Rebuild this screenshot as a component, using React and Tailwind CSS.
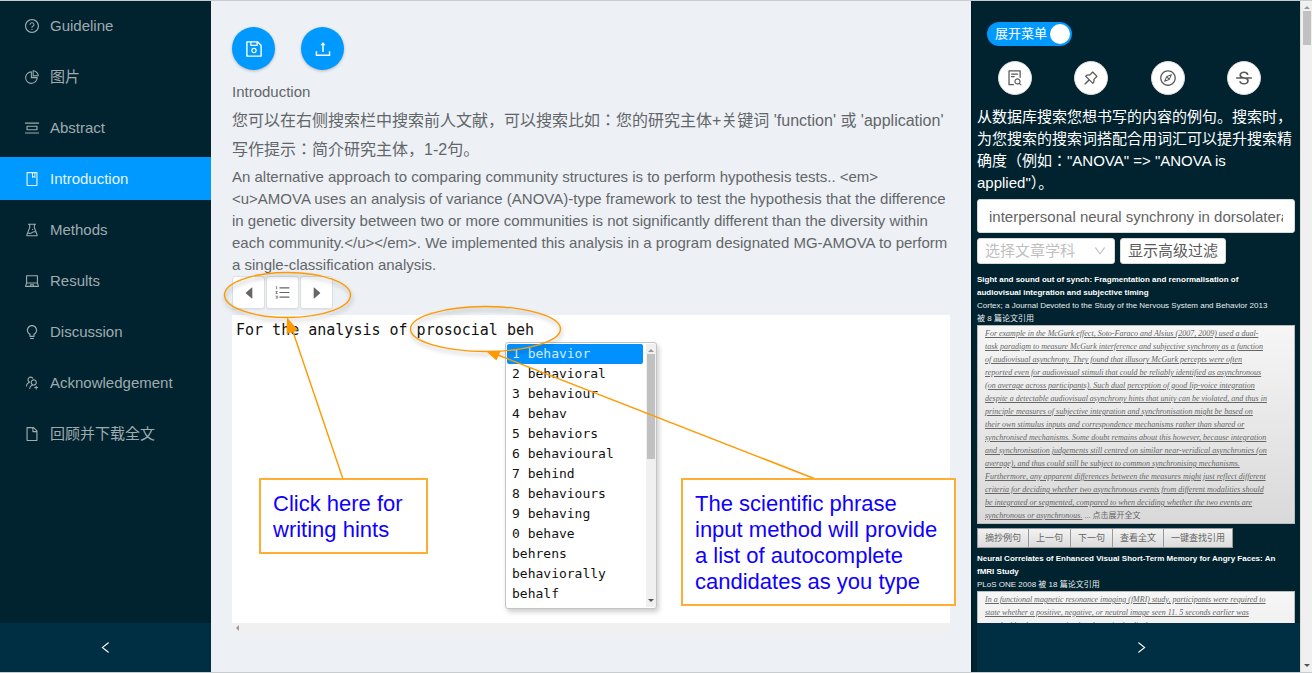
import React from "react";
import {
  AiOutlineQuestionCircle, AiOutlinePieChart, AiOutlinePicCenter, AiOutlineBook, AiOutlineExperiment,
  AiOutlineLaptop, AiOutlineBulb, AiOutlineUsergroupAdd, AiOutlineFile, AiOutlineSave, AiOutlineUpload,
  AiOutlineOrderedList, AiOutlineFileSearch, AiOutlinePushpin, AiOutlineCompass, AiOutlineStrikethrough,
  AiOutlineLeft, AiOutlineRight, AiOutlineDown, AiFillCaretLeft, AiFillCaretRight,
} from "react-icons/ai";

const MENU = [
  [AiOutlineQuestionCircle, "Guideline"],
  [AiOutlinePieChart, "图片"],
  [AiOutlinePicCenter, "Abstract"],
  [AiOutlineBook, "Introduction"],
  [AiOutlineExperiment, "Methods"],
  [AiOutlineLaptop, "Results"],
  [AiOutlineBulb, "Discussion"],
  [AiOutlineUsergroupAdd, "Acknowledgement"],
  [AiOutlineFile, "回顾并下载全文"],
];

const CANDIDATES = [
  "1 behavior", "2 behavioral", "3 behaviour", "4 behav", "5 behaviors", "6 behavioural", "7 behind",
  "8 behaviours", "9 behaving", "0 behave", "behrens", "behaviorally", "behalf", "behaviored",
];

const TOOLS = [
  [AiOutlineFileSearch, "搜索"],
  [AiOutlinePushpin, "固定"],
  [AiOutlineCompass, "浏览"],
  [AiOutlineStrikethrough, "删除线"],
];

const EXCERPT = [
  "For example in the McGurk effect, Soto-Faraco and Alsius (2007, 2009) used a dual-",
  "task paradigm to measure McGurk interference and subjective synchrony as a function",
  "of audiovisual asynchrony. They found that illusory McGurk percepts were often",
  "reported even for audiovisual stimuli that could be reliably identified as asynchronous",
  "(on average across participants). Such dual perception of good lip-voice integration",
  "despite a detectable audiovisual asynchrony hints that unity can be violated, and thus in",
  "principle measures of subjective integration and synchronisation might be based on",
  "their own stimulus inputs and correspondence mechanisms rather than shared or",
  "synchronised mechanisms. Some doubt remains about this however, because integration",
  "and synchronisation judgements still centred on similar near-veridical asynchronies (on",
  "average), and thus could still be subject to common synchronising mechanisms.",
  "Furthermore, any apparent differences between the measures might just reflect different",
  "criteria for deciding whether two asynchronous events from different modalities should",
  "be integrated or segmented, compared to when deciding whether the two events are",
  "synchronous or asynchronous.",
];

const EXCERPT_2 = [
  "In a functional magnetic resonance imaging (fMRI) study, participants were required to",
  "state whether a positive, negative, or neutral image seen 11. 5 seconds earlier was",
  "matched by the current stimulus shown in the display.",
];

function Lines({ lines }) {
  return lines.map((line, i) => (
    <React.Fragment key={line}>
      {i > 0 && <br />}
      {line}
    </React.Fragment>
  ));
}

function Sidebar() {
  return (
    <aside className="flex w-[211px] shrink-0 flex-col bg-[#00232f]">
      <nav className="flex flex-1 flex-col gap-2 pt-[3px]">
        {MENU.map(([Icon, label]) => (
          <a
            key={label}
            href="#"
            className={
              label === "Introduction"
                ? "flex h-[43px] items-center gap-2.5 bg-[#0099ff] pl-6 text-[15px] leading-[23px] text-[#e6f5ff]"
                : "flex h-[43px] items-center gap-2.5 pl-6 text-[15px] leading-[23px] text-[#a0abb0]"
            }
          >
            <Icon size={16} />
            {label}
          </a>
        ))}
      </nav>
      <button aria-label="收起" className="flex h-[49px] items-center justify-center bg-[#002e42] text-white">
        <AiOutlineLeft size={15} />
      </button>
    </aside>
  );
}

function Candidates() {
  return (
    <div className="absolute left-[294px] top-[341px] flex h-[267px] w-[152px] rounded-[3px] border border-[#c4c4c4] bg-white py-px pl-px shadow-[2px_3px_5px_rgba(0,0,0,0.2)]">
      <ul
        role="listbox"
        aria-label="Candidates"
        className="flex-1 overflow-hidden font-['DejaVu_Sans_Mono',monospace] text-[13px] leading-5 text-[#111]"
      >
        {CANDIDATES.map((c, i) => (
          <li
            key={c}
            role="option"
            aria-selected={i === 0}
            className={i === 0 ? "mr-[3px] rounded-[2px] bg-[#0091ff] pl-[5px] text-[#d5edff]" : "pl-[5px]"}
          >
            {c}
          </li>
        ))}
      </ul>
      <div className="flex w-2.5 flex-col items-center justify-between bg-[#f0f0f0] py-1">
        <svg width="6" height="4"><path d="M0 4 3 1l3 3z" fill="#999" /></svg>
        <div className="mb-auto mt-0.5 h-[105px] w-2 bg-[#c1c1c1]" />
        <svg width="6" height="4"><path d="M0 0h6L3 3z" fill="#555" /></svg>
      </div>
    </div>
  );
}

function Annotations() {
  return (
    <>
      <svg
        aria-hidden="true"
        className="pointer-events-none absolute left-0 top-0 h-full w-full drop-shadow-[1px_3px_2px_rgba(0,0,0,0.3)]"
        fill="none"
        stroke="#ff9900"
        strokeWidth="1.4"
      >
        <ellipse cx="76.500" cy="294" rx="63" ry="22.500" />
        <ellipse cx="274.500" cy="328" rx="75" ry="22.500" />
      </svg>
      <svg
        aria-hidden="true"
        className="pointer-events-none absolute left-0 top-0 h-full w-full"
        stroke="#ff9900"
        strokeWidth="1.4"
      >
        <path d="M132 478 80 325M607 479 287 354" />
        <path d="M76 316.500 87 329 75.500 333zM275.500 350.500 289.500 350 285.500 359.500z" fill="#ff9900" stroke="none" />
      </svg>
      <p className="absolute left-12 top-[477px] w-[169px] border-2 border-[#ffad33] bg-white px-3 pb-[9px] pt-[11px] text-[22px] leading-[26px] text-[#0f00ff]">
        Click here for writing hints
      </p>
      <p className="absolute left-[470px] top-[477px] w-[275px] border-2 border-[#ffad33] bg-white px-3 pb-[9px] pt-[11px] text-[22px] leading-[26px] text-[#0f00ff]">
        The scientific phrase input method will provide a list of autocomplete candidates as you type
      </p>
    </>
  );
}

function Editor() {
  const round =
    "flex size-[43px] items-center justify-center rounded-full bg-[#0099ff] text-white shadow-[0_1px_3px_rgba(0,0,0,0.25)]";
  const step =
    "flex h-[33px] w-[33px] items-center justify-center rounded-[3px] border border-[#dcdfe2] bg-white text-[#666] shadow-[0_1px_1px_rgba(0,0,0,0.06)]";
  return (
    <main className="relative flex min-w-0 flex-1 flex-col bg-[#edf1f5] pl-[21px] pr-[21px] text-[15px] leading-[22px] text-[#636669]">
      <div className="flex gap-[26px] pt-[26px]">
        <button aria-label="Save" className={round}><AiOutlineSave size={20} /></button>
        <button aria-label="Upload" className={round}><AiOutlineUpload size={20} /></button>
      </div>
      <h1 className="mt-[11px]">Introduction</h1>
      <p className="mt-[3px] whitespace-nowrap text-[16px] leading-[29px]">
        您可以在右侧搜索栏中搜索前人文献，可以搜索比如：您的研究主体+关键词 'function' 或 'application'
      </p>
      <p className="text-[16px] leading-[29px]">写作提示：简介研究主体，1-2句。</p>
      <p className="mt-0.5 -mr-2">
        An alternative approach to comparing community structures is to perform hypothesis tests.. &lt;em&gt;<br />
        &lt;u&gt;AMOVA uses an analysis of variance (ANOVA)-type framework to test the hypothesis that the difference in
        genetic diversity between two or more communities is not significantly different than the diversity within each
        community.&lt;/u&gt;&lt;/em&gt;. We implemented this analysis in a program designated MG-AMOVA to perform a
        single-classification analysis.
      </p>
      <div className="flex gap-px">
        <button aria-label="Previous hint" className={step}><AiFillCaretLeft size={16} /></button>
        <button aria-label="Hints" className={step}><AiOutlineOrderedList size={17} /></button>
        <button aria-label="Next hint" className={step}><AiFillCaretRight size={16} /></button>
      </div>
      <textarea
        aria-label="Introduction text"
        defaultValue="For the analysis of prosocial beh"
        className="mt-1.5 block min-h-0 w-full flex-1 resize-none bg-white p-1 font-['DejaVu_Sans_Mono',monospace] text-[15px] leading-[22px] text-[#111] outline-none"
      />
      <div className="mb-[39px] flex h-2.5 items-center bg-[#f0f0f0] pl-[3px]">
        <svg width="4" height="6"><path d="M4 0v6L1 3z" fill="#999" /></svg>
      </div>
      <Candidates />
      <Annotations />
    </main>
  );
}

function Result({ title, source, children }) {
  return (
    <article className="whitespace-nowrap">
      <h2 className="font-bold text-white">{title}</h2>
      <p className="text-[#e8ecee]">{source}</p>
      <div className="min-h-[199px] border border-[#bbb] bg-linear-to-b from-[#f6f6f6] to-[#d9d9d9] px-[7px] py-px font-['Liberation_Serif','Noto_Sans_CJK_JP',serif] text-[#666]">
        {children}
      </div>
    </article>
  );
}

function SearchPanel() {
  return (
    <aside className="flex w-[329px] shrink-0 flex-col border-l border-[#001a24] bg-[#00232f] text-white">
      <div className="min-h-0 flex-1 overflow-hidden pl-[5px] pr-[5px] pt-[21px]">
        <button
          role="switch"
          aria-checked="true"
          className="ml-2.5 flex h-6 w-[85px] items-center justify-between rounded-full bg-[#0099ff] pl-2 pr-0.5 text-[13px]"
        >
          展开菜单
          <span className="size-5 rounded-full bg-white" />
        </button>
        <div className="mt-[15px] flex justify-between pl-[21px] pr-[34px]">
          {TOOLS.map(([Icon, label]) => (
            <button
              key={label}
              aria-label={label}
              className="flex size-[34px] items-center justify-center rounded-full border border-[#d9d9d9] bg-white text-[#595959]"
            >
              <Icon size={18} />
            </button>
          ))}
        </div>
        <p className="mt-[11px] text-[15px] leading-[22px]">
          从数据库搜索您想书写的内容的例句。搜索时，为您搜索的搜索词搭配合用词汇可以提升搜索精确度（例如："ANOVA" =&gt; "ANOVA is<br />applied"）。
        </p>
        <input
          aria-label="Search"
          defaultValue="interpersonal neural synchrony in dorsolateral prefrontal cortex"
          className="mt-[5px] block h-[34px] w-full rounded-[3px] border border-[#d9d9d9] bg-white px-[11px] text-[15px] text-[#636363] outline-none"
        />
        <div className="mt-[5px] flex gap-[5px] text-[15px]">
          <div className="relative">
            <select
              aria-label="选择文章学科"
              className="h-[26px] w-[138px] appearance-none rounded-[3px] border border-[#d9d9d9] bg-white pl-[7px] text-[#bfbfbf] outline-none"
            >
              <option>选择文章学科</option>
            </select>
            <AiOutlineDown size={14} className="pointer-events-none absolute right-2 top-1.5 text-[#bfbfbf]" />
          </div>
          <button className="h-[26px] rounded-[3px] border border-[#d9d9d9] bg-white px-[7px] text-[#595959]">显示高级过滤</button>
        </div>
        <div className="mt-[9px] text-[8px] leading-[13px]">
          <Result
            title={<>Sight and sound out of synch: Fragmentation and renormalisation of<br />audiovisual integration and subjective timing</>}
            source={<>Cortex; a Journal Devoted to the Study of the Nervous System and Behavior 2013<br />被 8 篇论文引用</>}
          >
            <i className="underline"><Lines lines={EXCERPT} /></i> ... 点击展开全文
          </Result>
          <div className="my-1 flex text-[9px]">
            {["摘抄例句", "上一句", "下一句", "查看全文", "一键查找引用"].map((t) => (
              <button key={t} className="h-5 border border-l-0 border-[#999] bg-linear-to-b from-[#f2f2f2] to-[#dcdcdc] px-[7px] text-[#666] first:border-l">
                {t}
              </button>
            ))}
          </div>
          <Result
            title={<>Neural Correlates of Enhanced Visual Short-Term Memory for Angry Faces: An<br />fMRI Study</>}
            source="PLoS ONE 2008 被 18 篇论文引用"
          >
            <i className="underline"><Lines lines={EXCERPT_2} /></i>
          </Result>
        </div>
      </div>
      <button aria-label="展开" className="ml-[5px] flex h-[49px] items-center justify-center bg-[#002e42] pl-1.5">
        <AiOutlineRight size={15} />
      </button>
    </aside>
  );
}

export default function App() {
  return (
    <div className="flex h-screen border-y border-[#c8ccce] font-['Liberation_Sans','Noto_Sans_CJK_JP',sans-serif]">
      <Sidebar />
      <Editor />
      <SearchPanel />
      <div aria-hidden="true" className="flex w-3 shrink-0 flex-col items-center border-l border-[#ddd] bg-[#f0f0f0] py-1">
        <svg width="6" height="4"><path d="M0 4 3 1l3 3z" fill="#999" /></svg>
        <div className="mb-auto mt-0.5 h-[34px] w-2 bg-[#c1c1c1]" />
        <svg width="6" height="4"><path d="M0 0h6L3 3z" fill="#555" /></svg>
      </div>
    </div>
  );
}
